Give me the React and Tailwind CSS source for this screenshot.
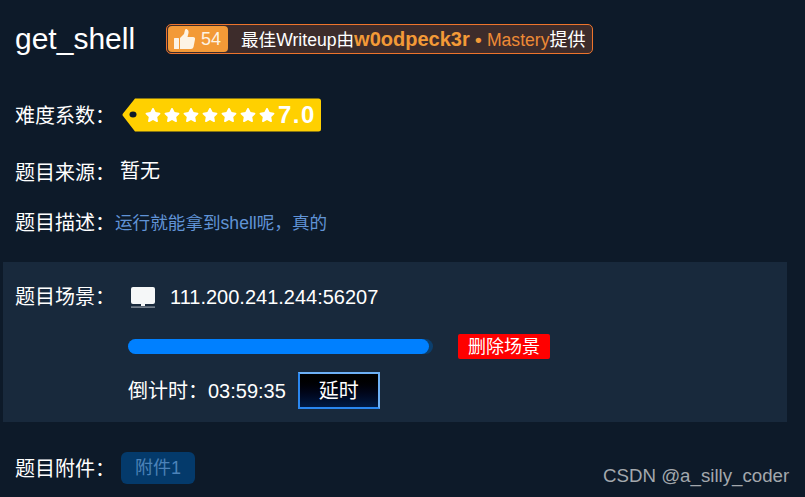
import React from "react";
import { FaStar } from "react-icons/fa";

const FONT = "font-['Liberation_Sans','Noto_Sans_CJK_SC',sans-serif]";
const COLON = "\uFF1A";
const COMMA = "\uFF0C";

function Label({ children, className = "w-[106px]" }) {
    return (
        <span className={`shrink-0 whitespace-nowrap text-[20px] leading-[26px] text-white ${className}`}>
            {children}
            {COLON}
        </span>
    );
}

function ThumbIcon() {
    return (
        <svg width="22" height="21" viewBox="0 0 22 21" fill="#fdf3e4" className="shrink-0">
            <rect x="0" y="9" width="5" height="11" rx="0.500" />
            <path d="M6 9L10 5L11 1Q11 0 12.500 0Q15 1 14.500 4L13.500 8H19Q21.500 8 21 10.500L19.500 18Q19 20 17 20H6Z" />
        </svg>
    );
}

function DifficultyTag() {
    return (
        <div className="relative flex h-[34px] w-[199px] items-center">
            {/* tag shape */}
            <svg width="199" height="34" viewBox="0 0 199 34" className="absolute inset-0">
                <path d="M13 0.500H196.500a2.500 2.500 0 0 1 2.500 2.500V31a2.500 2.500 0 0 1-2.500 2.500H13L1 18a2 2 0 0 1 0-2.500Z" fill="#ffd000" />
                <ellipse cx="11" cy="16.500" rx="3.500" ry="3" fill="#0d1a29" />
            </svg>
            <div className="relative ml-[23px] flex items-center gap-[3px] text-white">
                {[0, 1, 2, 3, 4, 5, 6].map((i) => (
                    <FaStar key={i} size={16} />
                ))}
            </div>
            <span className="relative ml-[3px] text-[24px] font-bold leading-none tracking-[1.5px] text-white">7.0</span>
        </div>
    );
}

export default function App() {
    return (
        <div className={`relative h-[497px] w-[805px] overflow-hidden bg-[#0d1a29] text-white ${FONT}`}>
            {/* Title row */}
            <div className="mt-[24px] flex h-[30px] items-center pl-[15px]">
                <h1 className="w-[151px] text-[30px] leading-none">get_shell</h1>
                <div className="flex h-[30px] w-[427px] items-center rounded-[5px] border border-[#ed742c] bg-[#3d2c2b] pl-[1px]">
                    <div className="flex h-[26px] w-[60px] items-center rounded-[4px] bg-[#f39a37] pl-[6px]">
                        <ThumbIcon />
                        <span className="ml-[5px] text-[18px] leading-none text-[#fdf3e4]">54</span>
                    </div>
                    <p className="ml-[13px] whitespace-nowrap text-[17.6px] leading-none">
                        最佳Writeup由
                        <span className="text-[20px] font-bold text-[#f39a37]">w0odpeck3r</span>
                        <span className="text-[19px] font-bold text-[#f39a37]"> • </span>
                        <span className="text-[#ed8a36]">Mastery</span>
                        <span className="text-[18px]">提供</span>
                    </p>
                </div>
            </div>

            {/* Difficulty */}
            <div className="mt-[44px] flex items-center pl-[15px]">
                <Label className="w-[107px] translate-y-[1px]">难度系数</Label>
                <DifficultyTag />
            </div>

            <div className="mt-[28px] flex pl-[15px]">
                <Label className="w-[105px]">题目来源</Label>
                <span className="-mt-[2px] text-[20px] leading-[26px]">暂无</span>
            </div>

            <div className="mt-[24px] flex items-center pl-[15px]">
                <Label className="w-[100px]">题目描述</Label>
                <span className="text-[17.6px] leading-[26px] text-[#6093d6]">运行就能拿到shell呢{COMMA}真的</span>
            </div>

            {/* Scene panel */}
            <section className="ml-[3px] mt-[26px] h-[160px] w-[784px] bg-[#18293c] pl-[12px] pt-[22px]">
                <div className="flex h-[26px] items-center">
                    <Label className="w-[116px]">题目场景</Label>
                    <svg width="24" height="21" viewBox="0 0 24 21" className="shrink-0" fill="#f5f7f8">
                        <path d="M2 0H22a2 2 0 0 1 2 2V15a2 2 0 0 1-2 2H2a2 2 0 0 1-2-2V2a2 2 0 0 1 2-2Z" />
                        <rect x="10" y="17" width="4" height="2" />
                        <rect x="0" y="19.500" width="24" height="1.200" fill="#9aa3ad" />
                    </svg>
                    <span className="ml-[15px] text-[20px] leading-none">111.200.241.244:56207</span>
                </div>

                <div className="mt-[24px] flex h-[25px] items-center pl-[113px]">
                    <div className="h-[15px] w-[305px] rounded-full bg-[#0b3f6e]">
                        <div className="h-full w-[301px] rounded-full bg-[#0080ff]" />
                    </div>
                    <button className="ml-[25px] h-[25px] w-[92px] rounded-[2px] bg-[#ff0000] text-[18px] leading-none text-white">删除场景</button>
                </div>

                <div className="mt-[13px] flex h-[37px] items-center pl-[113px]">
                    <span className="text-[20px] leading-none">倒计时{COLON}</span>
                    <span className="text-[20px] leading-none">03:59:35</span>
                    <button className="ml-[12px] h-[37px] w-[82px] border-2 border-[#2a87f0] border-t-[#6db0f5] border-r-[#6db0f5] bg-gradient-to-b from-[#000000] to-[#001a44] text-[20px] leading-none text-white">延时</button>
                </div>
            </section>

            {/* Attachments */}
            <div className="mt-[30px] flex items-center pl-[15px]">
                <Label className="w-[106px] translate-y-[1px]">题目附件</Label>
                <span className="flex h-[32px] w-[74px] items-center justify-center rounded-[6px] bg-[#043a6b] text-[18px] leading-none text-[#4c82b8]">附件1</span>
            </div>

            {/* Watermark */}
            <span className="absolute left-[603px] top-[466px] text-[18.7px] leading-[20px] text-[#a3a8ad]">CSDN @a_silly_coder</span>
        </div>
    );
}
